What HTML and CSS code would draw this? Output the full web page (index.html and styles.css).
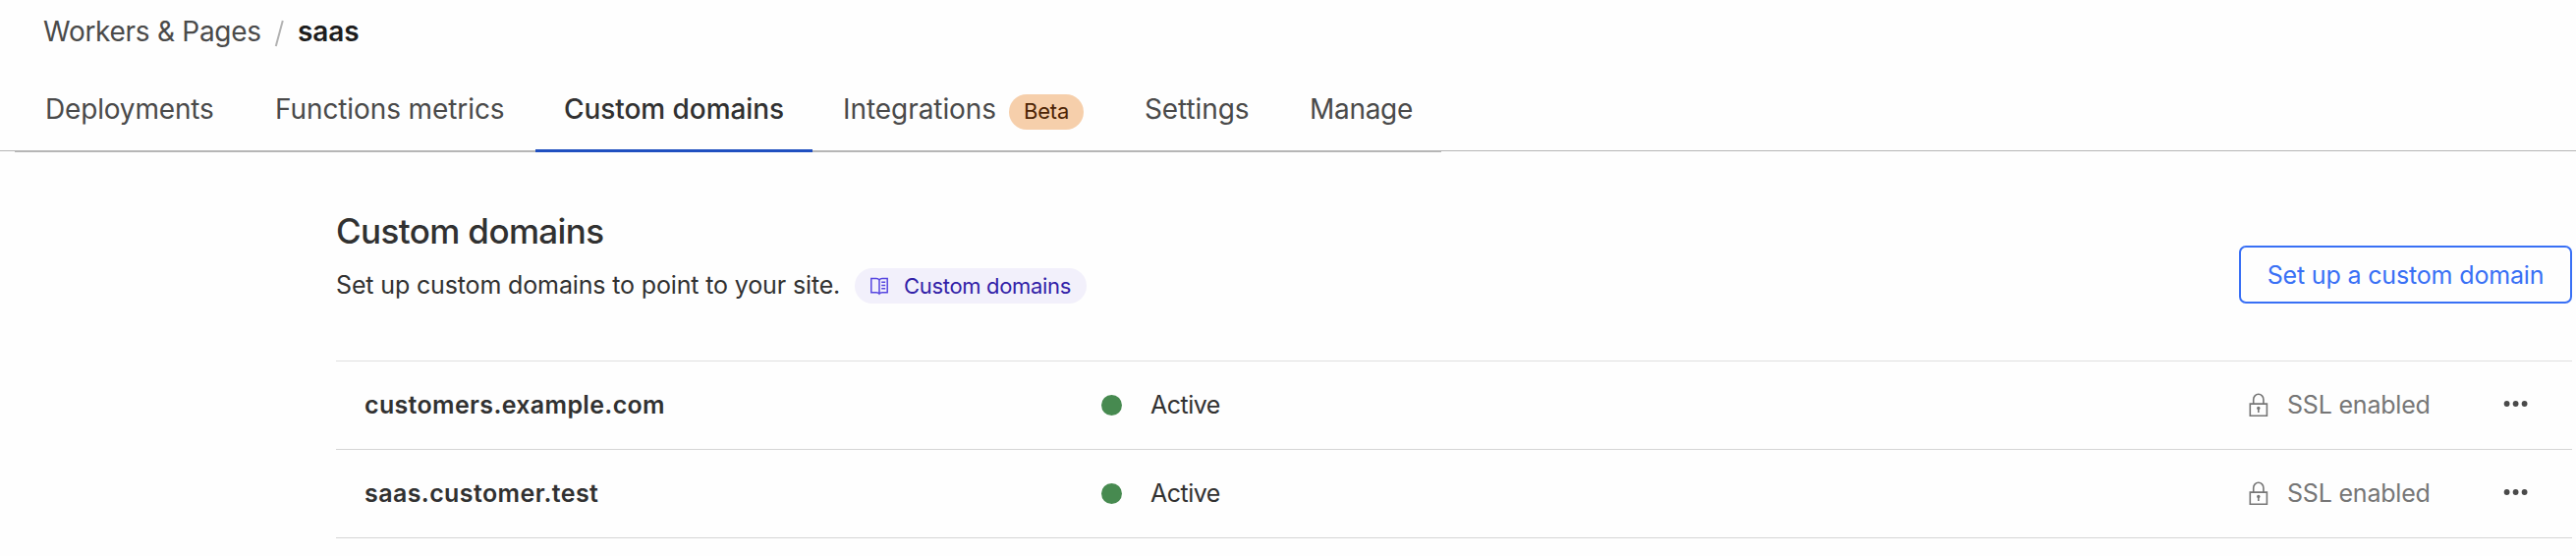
FILE: index.html
```
<!DOCTYPE html>
<html lang="en">
<head>
<meta charset="utf-8">
<title>saas - Custom domains</title>
<link rel="stylesheet" href="styles.css">
</head>
<body>
<nav class="breadcrumb">
  <a class="crumb">Workers &amp; Pages</a>
  <svg class="slash" width="11" height="28" viewBox="0 0 11 28"><path d="M1.8 27 8.8 1" stroke="#b2b2b2" stroke-width="2" fill="none"/></svg>
  <strong class="current">saas</strong>
</nav>
<nav class="tabbar">
  <div class="tabs">
    <a class="tab deployments">Deployments</a>
    <a class="tab metrics">Functions metrics</a>
    <a class="tab domains active">Custom domains</a>
    <a class="tab integrations">Integrations<span class="beta">Beta</span></a>
    <a class="tab settings">Settings</a>
    <a class="tab manage">Manage</a>
  </div>
</nav>
<main class="content">
  <header class="intro">
    <div class="heading">
      <h1 class="title">Custom domains</h1>
      <p class="description"><span class="desc-text">Set up custom domains to point to your site.</span>
        <a class="doc-pill">
          <svg class="book" width="20" height="19" viewBox="0 0 20 19" fill="none" stroke="#5746e0" stroke-width="1.5"><path d="M10 3Q9 1.5 7 1.5H1.8v14.2H7q2 0 3 1.5 1-1.5 3-1.5h5.2V1.5H13q-2 0-3 1.5v14"/><path d="M12.2 5.2h4M12.2 8.5h4M12.2 11.8h4"/></svg>
          <span>Custom domains</span>
        </a>
      </p>
    </div>
    <button class="setup">Set up a custom domain</button>
  </header>
  <section class="list">
    <div class="row">
      <strong class="name example">customers.example.com</strong>
      <span class="status"><i class="dot"></i><span class="state">Active</span></span>
      <span class="ssl"><svg class="lock" width="20" height="25" viewBox="0 0 20 25" fill="none" stroke="#767676" stroke-width="1.6"><path d="M1.3 11.1h17.1v12.1H1.3z"/><path d="M4.7 11V6.7a5.1 5.4 0 0 1 10.2 0V11"/><circle cx="9.8" cy="15.5" r="1.7" fill="#767676" stroke="none"/><path d="M9.8 15.5v4.6"/></svg><span>SSL enabled</span></span>
      <svg class="more" width="26" height="8" viewBox="0 0 26 8" fill="#4a4a4a"><circle cx="3.6" cy="4" r="2.9"/><circle cx="12.6" cy="4" r="2.9"/><circle cx="21.6" cy="4" r="2.9"/></svg>
    </div>
    <div class="row">
      <strong class="name test">saas.customer.test</strong>
      <span class="status"><i class="dot"></i><span class="state">Active</span></span>
      <span class="ssl"><svg class="lock" width="20" height="25" viewBox="0 0 20 25" fill="none" stroke="#767676" stroke-width="1.6"><path d="M1.3 11.1h17.1v12.1H1.3z"/><path d="M4.7 11V6.7a5.1 5.4 0 0 1 10.2 0V11"/><circle cx="9.8" cy="15.5" r="1.7" fill="#767676" stroke="none"/><path d="M9.8 15.5v4.6"/></svg><span>SSL enabled</span></span>
      <svg class="more" width="26" height="8" viewBox="0 0 26 8" fill="#4a4a4a"><circle cx="3.6" cy="4" r="2.9"/><circle cx="12.6" cy="4" r="2.9"/><circle cx="21.6" cy="4" r="2.9"/></svg>
    </div>
  </section>
</main>
</body>
</html>
```
FILE: styles.css
```
* { box-sizing: border-box; }
body { margin: 0; background: #fefefe; color: #313131; font-family: Inter, sans-serif; font-size: 25px; overflow: hidden; }
.breadcrumb { height: 64px; padding-left: 44px; display: flex; align-items: center; line-height: 64px; font-size: 28px; color: #4a4a4a; }
.crumb { width: 235px; letter-spacing: -0.28px; white-space: nowrap; }
.slash { margin-top: 4px; margin-right: 13px; }
.current { font-weight: 600; color: #1d1d1d; letter-spacing: -0.1px; }
.tabbar { height: 90px; padding-left: 15px; border-bottom: 1px solid #b6b6b6; }
.tabs { width: 1452px; height: 91px; display: flex; border-bottom: 2px solid #b6b6b6; }
.tab { height: 91px; padding: 5px 0 0 31px; line-height: 84px; font-size: 28px; color: #4a4a4a; letter-spacing: -0.1px; white-space: nowrap; }
.deployments { width: 234px; letter-spacing: -0.17px; }
.metrics { width: 296px; }
.domains { width: 282px; padding-left: 29px; letter-spacing: -0.06px; }
.integrations { width: 308px; display: flex; letter-spacing: -0.06px; }
.settings { width: 167px; padding-left: 30px; }
.manage { width: 165px; letter-spacing: -0.29px; }
.active { border-bottom: 3px solid #2050c0; color: #313131; font-weight: 500; }
.beta { width: 76px; height: 36px; margin: 27px 0 0 13px; border-radius: 18px; background: #f6cfab; color: #4d2404; font-size: 22px; line-height: 35px; text-align: center; letter-spacing: -0.15px; }
.content { width: 2618px; padding-left: 342px; }
.intro { height: 213px; display: flex; justify-content: space-between; }
.heading { padding-top: 61px; }
.title { margin: 0; height: 40px; line-height: 40px; font-size: 35px; font-weight: 500; letter-spacing: -0.62px; }
.description { margin: 18px 0 0; display: flex; align-items: center; height: 36px; line-height: 34px; white-space: nowrap; }
.desc-text { width: 528px; letter-spacing: -0.14px; line-height: 34px; padding-bottom: 2px; }
.doc-pill { width: 236px; height: 36px; border-radius: 18px; background: #f2f0fb; color: #321fa8; padding-left: 15px; display: flex; align-items: center; font-size: 22px; letter-spacing: -0.32px; line-height: 36px; }
.book { margin-right: 15px; }
.setup { width: 339px; height: 59px; margin-top: 96px; padding: 1px 0 0; border: 2px solid #3970f5; border-radius: 7px; background: transparent; color: #3970f5; font: 400 25px/54px Inter, sans-serif; letter-spacing: -0.16px; }
.list { border-top: 1px solid #dfdfdf; }
.row { height: 90px; display: flex; align-items: center; border-bottom: 1px solid #d6d6d6; padding-left: 29px; line-height: 86px; white-space: nowrap; }
.name, .state, .ssl span { padding-bottom: 2px; }
.name { width: 750px; font-weight: 600; }
.example { letter-spacing: 0.34px; }
.test { letter-spacing: 0.4px; }
.status { width: 1168px; display: flex; align-items: center; }
.dot { width: 21px; height: 21px; border-radius: 50%; background: #478a50; margin-right: 29px; }
.state { letter-spacing: -0.5px; }
.ssl { width: 259px; display: flex; align-items: center; color: #767676; letter-spacing: -0.2px; }
.lock { margin-right: 19px; }
.more { margin-top: -4px; }
```
